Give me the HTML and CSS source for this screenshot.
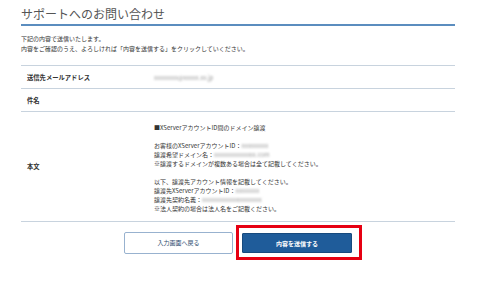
FILE: index.html
```html
<!DOCTYPE html>
<html lang="ja">
<head>
    <meta charset="UTF-8">
    <meta name="viewport" content="width=device-width, initial-scale=1.0">
    <title>サポートへのお問い合わせ</title>
    <link rel="stylesheet" href="styles.css">
</head>
<body>

<div class="contact">
    <h1 class="contact-title">サポートへのお問い合わせ</h1>

    <p class="contact-lead">
        下記の内容で送信いたします。<br>
        内容をご確認のうえ、よろしければ「内容を送信する」をクリックしていください。
    </p>

    <table class="confirm-table">
        <tr>
            <th>送信先メールアドレス</th>
            <td><span class="masked">xxxxxxxx@xxxxx.xx.jp</span></td>
        </tr>
        <tr>
            <th>件名</th>
            <td></td>
        </tr>
        <tr class="body-row">
            <th>本文</th>
            <td>
                ■XServerアカウントID間のドメイン譲渡<br>
                <br>
                お客様のXServerアカウントID：<span class="masked">xxxxxxxxx</span><br>
                譲渡希望ドメイン名：<span class="masked">xxxxxxxxxxxxxx.com</span><br>
                ※譲渡するドメインが複数ある場合は全て記載してください。<br>
                <br>
                以下、譲渡先アカウント情報を記載してください。<br>
                譲渡先XServerアカウントID：<span class="masked">xxxxxxxx</span><br>
                譲渡先契約名義：<span class="masked">xxxxxxxxxxxxxxxxxxxx</span><br>
                ※法人契約の場合は法人名をご記載ください。
            </td>
        </tr>
    </table>

    <div class="contact-actions">
        <button class="btn btn-back">入力画面へ戻る</button>
        <div class="highlight">
            <button class="btn btn-send">内容を送信する</button>
        </div>
    </div>
</div>

</body>
</html>
```

FILE: styles.css
```css
/* 基本 */
body {
    margin: 0;
    padding: 0;
    background-color: #fff;
    font-family: "Noto Sans CJK JP", "Noto Sans", sans-serif;
    color: #333;
}

.contact {
    width: 434px;
    margin-left: 21px;
    padding-top: 5px;
}

.contact-title {
    margin: 0;
    padding-bottom: 1px;
    font-size: 12px;
    font-weight: normal;
    line-height: 18px;
    color: #555;
    border-bottom: 2px solid #5b8dbf;
}

.contact-lead {
    margin: 8px 0 11px;
    font-size: 6px;
    line-height: 10px;
}

.confirm-table {
    width: 100%;
    border-collapse: collapse;
    font-size: 6px;
    border-top: 1px solid #c8d3de;
}

.confirm-table th,
.confirm-table td {
    border-bottom: 1px solid #c8d3de;
    height: 22px;
    padding: 0;
    vertical-align: middle;
    text-align: left;
}

.confirm-table th {
    width: 127px;
    padding-left: 6px;
    font-weight: bold;
    font-size: 6.3px;
}

.confirm-table td {
    line-height: 9px;
}

.body-row td {
    padding: 11px 0 8px;
}

.masked {
    color: #999;
    filter: blur(1.2px);
}

.contact-actions {
    display: flex;
    justify-content: center;
    align-items: center;
    gap: 3px;
    margin-top: 3px;
    margin-left: 10px;
}

.btn {
    font-family: inherit;
    font-size: 6px;
    cursor: pointer;
}

.btn-back {
    width: 109px;
    height: 22px;
    background-color: #fff;
    color: #2c4a6e;
    border: 1px solid #98b2cf;
    border-radius: 2px;
}

.highlight {
    padding: 5px 7px 4px 3px;
    border: 3px solid #e60012;
}

.btn-send {
    display: block;
    width: 110px;
    height: 20px;
    background-color: #1f5c9a;
    color: #fff;
    font-weight: bold;
    border: 1px solid #174a7e;
    border-radius: 1px;
}
```
